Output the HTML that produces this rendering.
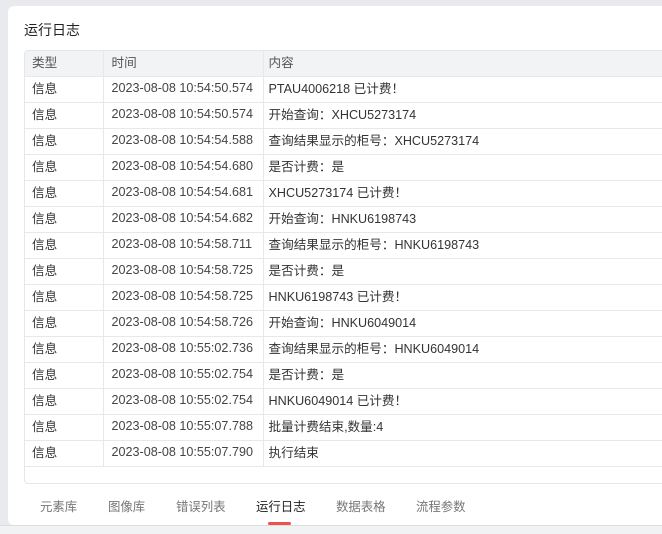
<!DOCTYPE html>
<html><head><meta charset="utf-8"><style>
body{margin:0;width:662px;height:533px;background:#e9eaee;overflow:hidden;font-family:"Liberation Sans","Noto Sans CJK SC",sans-serif;position:relative}
.panel{position:absolute;left:8px;top:6px;width:670px;height:519px;background:#fff;border-radius:6px}
.title{position:absolute;left:24px;top:20px;font-size:14px;color:#222}
.tbl{position:absolute;left:24px;top:50px;width:660px;height:434px;border:1px solid #e4e6eb;border-radius:4px;box-sizing:border-box;overflow:hidden}
table{border-collapse:collapse;font-size:12.6px;color:#333;width:100%;margin-top:-1px}
td{height:25px;border-bottom:1px solid #e6e8ec;border-right:1px solid #e6e8ec;padding:0 0 3px 7px;box-sizing:border-box;white-space:nowrap}
tr{height:26px}
tr.h td{background:#f2f3f5;color:#555;height:26px}
td.c1{width:78px}td.c2{width:160px;color:#444;padding-left:8px}
td.c3{padding-left:5px}
.tabs{position:absolute;top:497px;font-size:12.4px;color:#777}
.ul{position:absolute;left:268px;top:522px;width:23px;height:3px;background:#f0504c;border-radius:2px}
.bot{position:absolute;left:0;top:525px;width:662px;height:8px;background:#f1f2f4;border-top:1px solid #dcdde0}
</style></head><body>
<div class="panel"></div>
<div class="title">运行日志</div>
<div class="tbl"><table>
<tr class="h"><td class="c1">类型</td><td class="c2">时间</td><td class="c3">内容</td></tr>
<tr><td class="c1">信息</td><td class="c2">2023-08-08 10:54:50.574</td><td class="c3">PTAU4006218 已计费！</td></tr>
<tr><td class="c1">信息</td><td class="c2">2023-08-08 10:54:50.574</td><td class="c3">开始查询：XHCU5273174</td></tr>
<tr><td class="c1">信息</td><td class="c2">2023-08-08 10:54:54.588</td><td class="c3">查询结果显示的柜号：XHCU5273174</td></tr>
<tr><td class="c1">信息</td><td class="c2">2023-08-08 10:54:54.680</td><td class="c3">是否计费：是</td></tr>
<tr><td class="c1">信息</td><td class="c2">2023-08-08 10:54:54.681</td><td class="c3">XHCU5273174 已计费！</td></tr>
<tr><td class="c1">信息</td><td class="c2">2023-08-08 10:54:54.682</td><td class="c3">开始查询：HNKU6198743</td></tr>
<tr><td class="c1">信息</td><td class="c2">2023-08-08 10:54:58.711</td><td class="c3">查询结果显示的柜号：HNKU6198743</td></tr>
<tr><td class="c1">信息</td><td class="c2">2023-08-08 10:54:58.725</td><td class="c3">是否计费：是</td></tr>
<tr><td class="c1">信息</td><td class="c2">2023-08-08 10:54:58.725</td><td class="c3">HNKU6198743 已计费！</td></tr>
<tr><td class="c1">信息</td><td class="c2">2023-08-08 10:54:58.726</td><td class="c3">开始查询：HNKU6049014</td></tr>
<tr><td class="c1">信息</td><td class="c2">2023-08-08 10:55:02.736</td><td class="c3">查询结果显示的柜号：HNKU6049014</td></tr>
<tr><td class="c1">信息</td><td class="c2">2023-08-08 10:55:02.754</td><td class="c3">是否计费：是</td></tr>
<tr><td class="c1">信息</td><td class="c2">2023-08-08 10:55:02.754</td><td class="c3">HNKU6049014 已计费！</td></tr>
<tr><td class="c1">信息</td><td class="c2">2023-08-08 10:55:07.788</td><td class="c3">批量计费结束,数量:4</td></tr>
<tr><td class="c1">信息</td><td class="c2">2023-08-08 10:55:07.790</td><td class="c3">执行结束</td></tr>
</table></div>
<div class="tabs" style="left:40px">元素库</div>
<div class="tabs" style="left:108px">图像库</div>
<div class="tabs" style="left:176px">错误列表</div>
<div class="tabs" style="left:256px;color:#222">运行日志</div>
<div class="tabs" style="left:336px">数据表格</div>
<div class="tabs" style="left:416px">流程参数</div>
<div class="ul"></div>
<div class="bot"></div>
</body></html>
